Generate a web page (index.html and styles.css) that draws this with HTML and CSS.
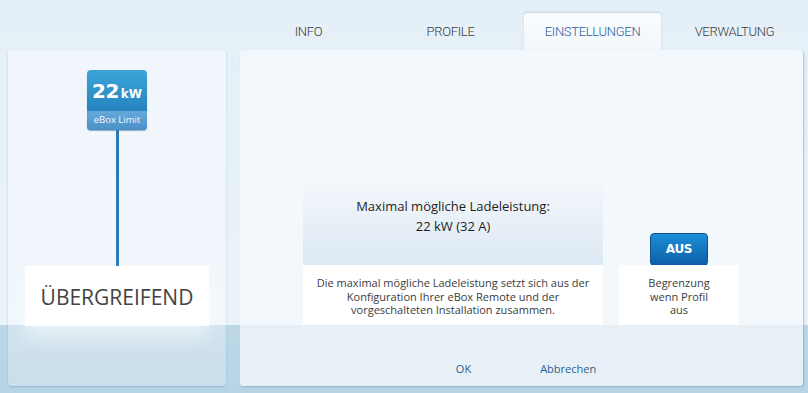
FILE: index.html
```html
<!DOCTYPE html>
<html>
  <head>
    <title>eBox Einstellungen</title>
    <meta charset="utf-8">
    <link rel="stylesheet" href="styles.css">
  </head>
  <body>
    <div id="tabs">
      <div class="tab">INFO</div>
      <div class="tab">PROFILE</div>
      <div class="tab active">EINSTELLUNGEN</div>
      <div class="tab">VERWALTUNG</div>
    </div>
    <div id="main">
      <div id="side">
        <div class="badge">
          <div class="value">22<span>kW</span></div>
          <div class="label">eBox Limit</div>
        </div>
        <div class="stem"></div>
        <div class="scope">ÜBERGREIFEND</div>
      </div>
      <div id="panel">
        <div class="content">
          <div class="col wide">
            <div class="head">Maximal mögliche Ladeleistung:<br>22 kW (32 A)</div>
            <div class="note">Die maximal mögliche Ladeleistung setzt sich aus der<br>Konfiguration Ihrer eBox Remote und der<br>vorgeschalteten Installation zusammen.</div>
          </div>
          <div class="col narrow">
            <div class="btn-area"><div class="btn">AUS</div></div>
            <div class="note">Begrenzung<br>wenn Profil<br>aus</div>
          </div>
        </div>
        <div class="foot">
          <a>OK</a>
          <a>Abbrechen</a>
        </div>
      </div>
    </div>
  </body>
</html>
```

FILE: styles.css
```css
html {height:100%;}
body {margin:0; height:393px; overflow:hidden; font-family:"Open Sans","DejaVu Sans",sans-serif;
  background:linear-gradient(to bottom, #e4eff7 0, #eaf3f9 325px, #bcd8e7 325px, #b7d4e5 393px);}

#tabs {display:flex; gap:5px; padding:13px 0 0 240px; height:37px;}
.tab {width:137px; text-align:center; font-family:Roboto,sans-serif; font-weight:300; font-size:13px; line-height:38px; color:#3c3c3c; letter-spacing:-.3px;}
.tab.active {background:linear-gradient(#fbfdfe,#f1f7fb); color:#2c609a; border-radius:4px 4px 0 0; box-shadow:0 -1px 2px rgba(120,150,175,.35);}

#main {display:flex; gap:14px; padding-left:8px;}

#side {width:218px; height:336px; border-radius:4px; display:flex; flex-direction:column; align-items:center;
  background:linear-gradient(to bottom, #f0f6fb 0, #f1f7fb 275px, #d0e2ee 275px, #cbdeeb 336px);
  box-shadow:0 1px 2px rgba(100,140,170,.4);}
.badge {margin-top:20px; width:60px; height:60px; border-radius:4px; overflow:hidden; background:linear-gradient(#3aa6d8,#1e74b4); box-shadow:0 1px 1px rgba(0,50,100,.4); color:#fff; text-align:center;}
.badge .value {height:41px; line-height:43px; font-family:"DejaVu Sans",sans-serif; font-weight:bold; font-size:20px; letter-spacing:-.5px;}
.badge .value span {font-size:12px; margin-left:2px; letter-spacing:0;}
.badge .label {height:19px; line-height:18px; font-size:9.5px; background:linear-gradient(#66aadb,#4a8fc8); color:#f2f8fc;}
.stem {width:3px; height:136px; background:#2b7ab6;}
.scope {width:184px; height:60px; background:#fff; text-align:center; line-height:62px; font-size:21px; color:#444; box-shadow:0 12px 18px rgba(255,255,255,.55);}

#panel {width:563px; height:336px; border-radius:4px; background:#f3f8fc; display:flex; flex-direction:column; box-shadow:1px 1px 2px rgba(100,140,170,.45);}
.content {display:flex; gap:16px; padding:130px 0 0 63px; height:145px;}
.col {display:flex; flex-direction:column;}
.wide {width:300px;}
.narrow {width:120px;}
.head {height:85px; box-sizing:border-box; padding-top:16px; text-align:center; font-size:13px; line-height:20px; color:#1e1e1e; background:linear-gradient(#f3f7fb,#dde9f3);}
.btn-area {height:85px; display:flex; align-items:flex-end; justify-content:center;}
.btn {width:56px; height:31px; margin-bottom:-1px; border:1px solid #0e4f8c; border-radius:4px; background:linear-gradient(#1b8fd6,#0c5fa8); color:#fff; font-family:"DejaVu Sans",sans-serif; font-weight:bold; font-size:12px; line-height:31px; text-align:center; letter-spacing:-.3px;}
.note {height:60px; box-sizing:border-box; padding-top:11px; background:#fff; text-align:center; font-size:11px; line-height:13.5px; color:#3c3c3c;}
.foot {flex:1; background:#e7f0f7; border-radius:0 0 4px 4px; display:flex; justify-content:center; gap:69px; padding:37px 0 0 9px; box-sizing:border-box; font-size:11px; line-height:14px;}
.foot a {color:#2d5f8e;}
```
